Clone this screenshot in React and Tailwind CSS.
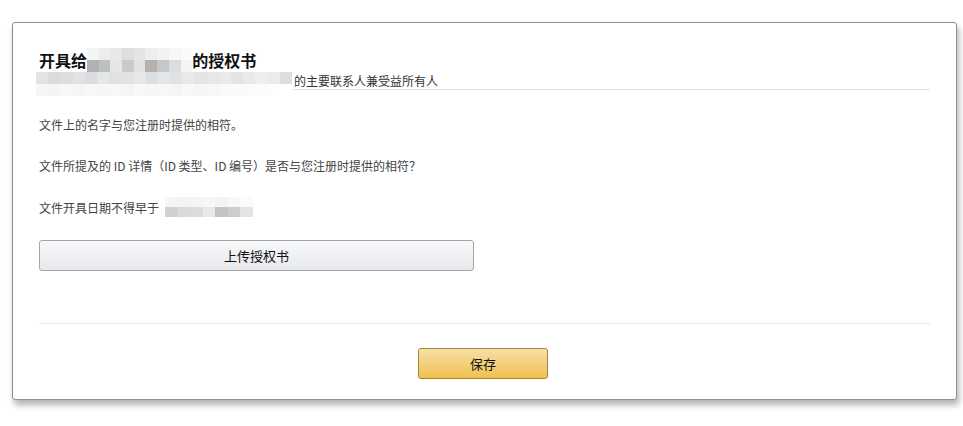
import React from 'react';

const font = { fontFamily: '"Noto Sans CJK SC", "Liberation Sans", sans-serif' };

// pixelated placeholders standing in for the masked names/dates
const titleMask = [
  ['#f4f4f4', '#ececec', '#e8e8e8', '#dedede', '#e4e4e4', '#eeeeee', '#f2f2f2', '#f6f6f6', '#fafafa'],
  ['#b3b1b1', '#bdc0c1', '#e6e6e6', '#cacaca', '#e2e2e2', '#b6b1ae', '#c5c8cb', '#d9dde0', '#f4f4f4']
];

const lineMask = [
  ['#e6e2e0', '#d9dbde', '#dcdee0', '#e0e2e4', '#dadcdf', '#e4e6e8', '#dfe1e3', '#e2e3e5', '#e6e7e9', '#dcdee1', '#e4e5e6', '#e0e2e4', '#e8e9ea', '#e2e4e6', '#e6e7e8', '#e9eaeb', '#e3e4e6', '#e8e9ea', '#eceeef', '#e9ebed', '#dcdfe2'],
  ['#f6f6f6', '#f4f4f4', '#f7f7f7', '#f5f5f5', '#f8f8f8', '#f6f6f6', '#f7f7f7', '#f5f5f5', '#f8f8f8', '#f6f6f6', '#f7f7f7', '#f5f5f5', '#f8f8f8', '#f6f6f6', '#f7f7f7', '#f9f9f9', '#fafafa', '#fbfbfb', '#fcfcfc', '#fdfdfd', '#ffffff']
];

const dateMask = [
  ['#f5f5f5', '#f2f2f2', '#f4f4f4', '#f6f6f6', '#f3f3f3', '#f7f7f7', '#fafafa'],
  ['#d0d0d0', '#dadada', '#dcdcdc', '#e8e8e8', '#c4c4c4', '#cdcdcd', '#e4e4e4']
];

function Mask({ rows, tile, height, className = '' }) {
  return (
    <span className={`inline-flex flex-col align-middle ${className}`}>
      {rows.map((row, i) => (
        <span key={i} className="flex">
          {row.map((c, j) => (
            <span key={j} style={{ background: c, width: tile, height }} />
          ))}
        </span>
      ))}
    </span>
  );
}

export default function App() {
  return (
    <div className="w-[963px] h-[426px] bg-white pt-[22px] pl-[12px] pr-[6px]" style={font}>
      <div className="border border-[#8f8f8f] rounded-[3px] bg-white shadow-[2px_5px_6px_rgba(0,0,0,0.3)] px-[26px] pt-[25px] pb-[20px]">
        {/* HEADER */}
        <div className="border-b border-[#e3e3e3]">
          <h1 className="text-[16px] leading-[23px] font-bold text-[#111] flex items-center">
            <span>开具给</span>
            <Mask rows={titleMask} tile={11.7} height={12} />
            <span>的授权书</span>
          </h1>
          <div className="text-[12px] leading-[16px] text-[#333] flex items-center h-[17px]">
            <Mask rows={lineMask} tile={12.2} height={12} className="-ml-[3px] mt-[7px] mr-[2px]" />
            <span>的主要联系人兼受益所有人</span>
          </div>
        </div>

        {/* BODY */}
        <div className="text-[12px] leading-[18px] text-[#444]">
          <p className="mt-[26px]">文件上的名字与您注册时提供的相符。</p>
          <p className="mt-[23px]">文件所提及的 ID 详情（ID 类型、ID 编号）是否与您注册时提供的相符？</p>
          <p className="mt-[24px] flex items-center">
            <span>文件开具日期不得早于</span>
            <Mask rows={dateMask} tile={12.5} height={10} className="ml-[6px] -mt-[2px]" />
          </p>
        </div>

        <button className="mt-[23px] w-[435px] h-[31px] rounded-[3px] border border-[#a6a6a6] bg-gradient-to-b from-[#f7f8fa] to-[#e7e9ec] text-[13px] text-[#111] flex items-center justify-center">
          上传授权书
        </button>

        <div className="mt-[52px] border-t border-[#e6e6e6]" />

        <div className="flex justify-center pt-[24px]">
          <button className="w-[130px] h-[31px] -ml-[3px] rounded-[3px] border border-[#a88734] bg-gradient-to-b from-[#f7dfa5] to-[#f0c14b] text-[13px] text-[#111] flex items-center justify-center">
            保存
          </button>
        </div>
      </div>
    </div>
  );
}
